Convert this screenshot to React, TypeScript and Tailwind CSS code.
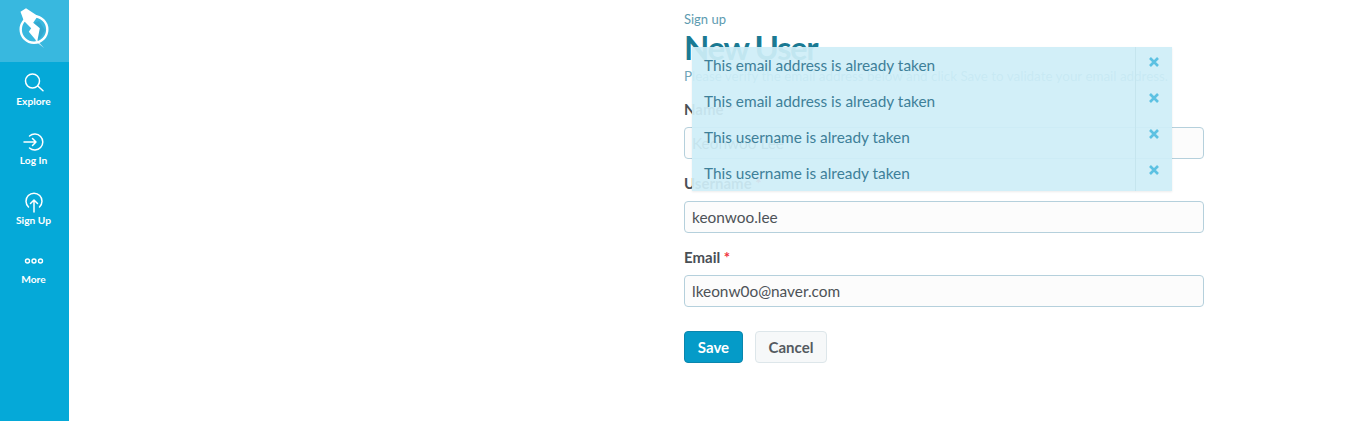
const font = { fontFamily: '"Lato", sans-serif' };

const navItems = [
  {
    label: "Explore",
    icon: (
      <svg width="22" height="22" viewBox="0 0 22 22" fill="none" stroke="currentColor" strokeWidth="1.5" strokeLinecap="round">
        <circle cx="9.5" cy="9" r="7" />
        <path d="M14.8 14 L20 18.8" />
      </svg>
    ),
  },
  {
    label: "Log In",
    icon: (
      <svg width="22" height="22" viewBox="0 0 22 22" fill="none" stroke="currentColor" strokeWidth="1.5" strokeLinecap="round" strokeLinejoin="round">
        <path d="M6.5 5 A8 8 0 1 1 6.5 17" />
        <path d="M1 11 H13 M9.5 7.5 L13 11 L9.5 14.5" />
      </svg>
    ),
  },
  {
    label: "Sign Up",
    icon: (
      <svg width="22" height="22" viewBox="0 0 22 22" fill="none" stroke="currentColor" strokeWidth="1.5" strokeLinecap="round" strokeLinejoin="round">
        <path d="M5.5 16 A8 8 0 1 1 16.5 16" />
        <path d="M11 21 V9 M7.5 12.5 L11 9 L14.5 12.5" />
      </svg>
    ),
  },
  {
    label: "More",
    icon: (
      <svg width="22" height="22" viewBox="0 0 22 22" fill="none" stroke="currentColor" strokeWidth="1.4">
        <circle cx="4.5" cy="11" r="2" />
        <circle cx="11" cy="11" r="2" />
        <circle cx="17.5" cy="11" r="2" />
      </svg>
    ),
  },
];

const alerts = [
  "This email address is already taken",
  "This email address is already taken",
  "This username is already taken",
  "This username is already taken",
];

function Logo() {
  return (
    <svg width="36" height="42" viewBox="0 0 36 42">
      <circle cx="18" cy="21.5" r="13.3" fill="none" stroke="#fff" strokeWidth="2.4" />
      <path d="M23 13 L29 22 L25 29 L21 33 L24 20 L18 15 Z" fill="#2f9fc6" opacity="0.6" />
      <path d="M4.5 3.7 L10 0.3 L21.8 8 L17.2 14.7 L23.8 20.3 L21.2 33.7 L12.8 23.7 L15.2 20.3 L7.8 12.7 Z" fill="#fff" />
      <path d="M21 32 L28 40 L19 33 Z" fill="#fff" opacity="0.7" />
    </svg>
  );
}

function Field({ label, value }: { label: string; value: string }) {
  return (
    <div className="mb-[15px]">
      <label className="mb-[8px] block h-[19px] text-[15px] leading-[19px] font-bold text-[#4a4f55]">
        {label} <span className="text-[#f0323c]">*</span>
      </label>
      <input
        readOnly
        value={value}
        className="block h-[32px] w-full rounded-[4px] border border-[#b5d0dc] bg-[#fcfcfc] px-[7px] text-[15.4px] text-[#4d5257] outline-none"
        style={font}
      />
    </div>
  );
}

export default function App() {
  return (
    <div className="flex h-[421px] overflow-hidden bg-white" style={font}>
      <nav className="flex w-[69px] shrink-0 flex-col items-center bg-[#05a9d8] text-white">
        <div className="flex h-[62px] w-full justify-center bg-[#38b8df] pr-[2px] pt-[8px]">
          <Logo />
        </div>
        <div className="flex w-full flex-col items-center pr-[2px] pt-[10px]">
          {navItems.map((item) => (
            <div key={item.label} className="flex h-[59.3px] w-full flex-col items-center">
              {item.icon}
              <span className="mt-[1px] text-[10.2px] leading-[13px] font-bold">{item.label}</span>
            </div>
          ))}
        </div>
      </nav>

      <main className="relative flex-1">
        <div className="ml-[615px] w-[520px] pt-[12px]">
          <div className="text-[13px] leading-[15px] text-[#5d9bb0]">Sign up</div>
          <h1 className="mt-[1px] h-[38px] text-[33px] leading-[38px] font-bold tracking-[-1.4px] text-[#1a7a93]">New User</h1>
          <p className="mb-[15px] mt-[1px] text-[13.4px] leading-[18px] text-[#6fa6b9]">
            Please verify the email address below and click Save to validate your email address.
          </p>
          <Field label="Name" value="Keonwoo Lee" />
          <Field label="Username" value="keonwoo.lee" />
          <Field label="Email" value="lkeonw0o@naver.com" />
          <div className="mt-[24px] flex gap-[12px]">
            <button className="h-[32px] w-[59px] rounded-[4px] border border-[#0a86ad] bg-[#059bc8] text-[15px] font-bold text-white">
              Save
            </button>
            <button className="h-[32px] w-[72px] rounded-[4px] border border-[#dde6ea] bg-[#f6f8f9] text-[15px] font-bold text-[#545a60]">
              Cancel
            </button>
          </div>
        </div>

        <div className="absolute left-[623px] top-[47px] w-[480px] bg-[#cfeef7]/[.93] shadow-[0_1px_2px_rgba(0,0,0,0.08)]">
          {alerts.map((text, i) => (
            <div key={i} className="flex h-[36px]">
              <div className="flex-1 pl-[12px] pt-[8px] text-[15.4px] leading-[20px] text-[#3e8099]">{text}</div>
              <div className="flex w-[37px] justify-center border-l border-[#c5e5ee] pt-[10px]">
                <svg width="10" height="10" viewBox="0 0 10 10" stroke="#5cc1e2" strokeWidth="2.6">
                  <path d="M1 1 L9 9 M9 1 L1 9" />
                </svg>
              </div>
            </div>
          ))}
        </div>
      </main>
    </div>
  );
}
